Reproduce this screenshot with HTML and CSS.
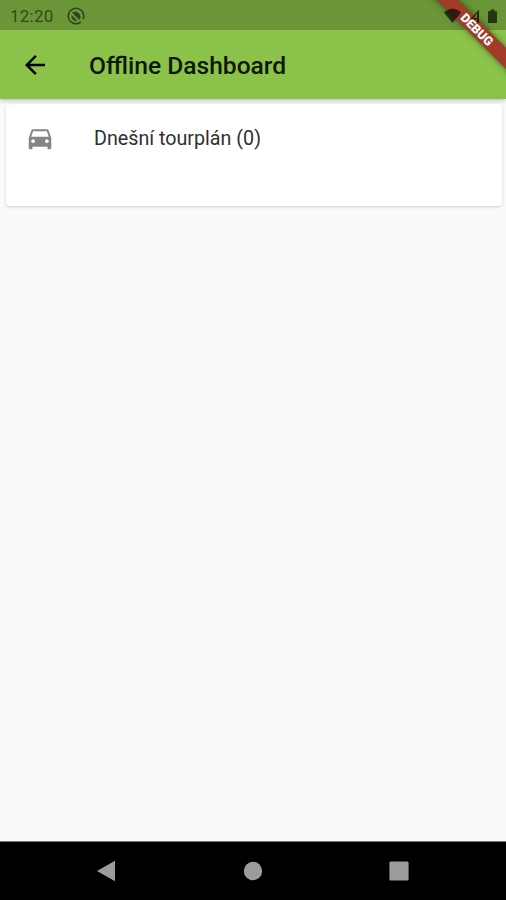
FILE: index.html
```html
<!DOCTYPE html>
<html lang="cs">
  <head>
    <meta charset="utf-8">
    <meta name="viewport" content="width=device-width, initial-scale=1.0">
    <title>Offline Dashboard</title>
    <link rel="stylesheet" href="styles.css">
  </head>
<body>
  <div class="screen">
    <div class="statusbar">
      <span class="clock">12:20</span>
      <svg class="sync" viewBox="0 0 18 18">
        <circle cx="9" cy="9" r="7.8" fill="none" stroke="currentColor" stroke-width="1.600" stroke-dasharray="45 4" stroke-dashoffset="-7"/>
        <path d="M5 5.500C8 3.500 13 5 13.500 9.500C13.500 11 13 12 12.300 12.700zM4.500 8l6 6C7 14.500 4 12 4.500 8z" fill="currentColor"/>
      </svg>
      <svg class="system" viewBox="0 0 56 18">
        <path d="M0 5.500Q8.500-2 17 5.500L8.500 16z"/>
        <path d="M35 2.500v13.500h-2v-3.500h-7zM33 6.500l-3.800 4.500H33z" fill-rule="evenodd"/>
        <path d="M44 4.200h2.500V2.500h4v1.700H53V16h-9z"/>
      </svg>
    </div>
    <div class="appbar">
      <svg class="back" viewBox="0 0 24 24"><path d="M20 11H7.830l5.590-5.590L12 4l-8 8 8 8 1.410-1.410L7.830 13H20v-2z"/></svg>
      <h1>Offline Dashboard</h1>
    </div>
    <div class="content">
      <div class="card">
        <svg class="car" viewBox="0 0 24 24"><path d="M18.920 6.010C18.720 5.420 18.160 5 17.500 5h-11c-.66 0-1.210.42-1.420 1.010L3 12v8c0 .55.45 1 1 1h1c.55 0 1-.45 1-1v-1h12v1c0 .55.45 1 1 1h1c.55 0 1-.45 1-1v-8l-2.080-5.990zM6.500 16c-.83 0-1.500-.67-1.500-1.500S5.670 13 6.500 13s1.500.67 1.500 1.500S7.330 16 6.500 16zm11 0c-.83 0-1.500-.67-1.500-1.500s.67-1.500 1.500-1.500 1.500.67 1.500 1.500-.67 1.500-1.500 1.500zM5 11l1.500-4.500h11L19 11H5z"/></svg>
        <span class="label">Dnešní tourplán (0)</span>
      </div>
    </div>
    <div class="navbar">
      <svg viewBox="0 0 22 22"><path d="M2 11L20 .7v20.600z"/></svg>
      <svg viewBox="0 0 22 22"><circle cx="11" cy="11" r="9.200"/></svg>
      <svg viewBox="0 0 22 22"><rect x="1.400" y="1.400" width="19.200" height="19.200" rx="1.500"/></svg>
    </div>
    <div class="banner"><span>DEBUG</span></div>
  </div>
</body>
</html>
```
FILE: styles.css
```css
body {
  margin: 0;
  background: #fafafa;
  font-family: Roboto, sans-serif;
}
.screen {
  position: relative;
  display: flex;
  flex-direction: column;
  height: 900px;
  overflow: hidden;
}
.statusbar {
  position: relative;
  z-index: 3;
  display: flex;
  align-items: center;
  box-sizing: border-box;
  height: 30px;
  padding: 1px 6px 0 10px;
  color: rgba(0,0,0,0.55);
}
.clock {
  width: 57px;
  font-size: 17px;
  letter-spacing: 0.25px;
}
.sync {
  width: 18px;
  height: 18px;
}
.system {
  width: 56px;
  height: 18px;
  margin-left: auto;
  fill: rgba(0,0,0,0.65);
}
.appbar {
  position: relative;
  z-index: 1;
  display: flex;
  align-items: center;
  box-sizing: border-box;
  height: 99px;
  margin-top: -30px;
  padding: 30px 20px 0;
  background: linear-gradient(#6a9638 30px, #8bc34a 30px);
  box-shadow: 0 1px 5px rgba(0,0,0,0.3);
}
.back {
  width: 30px;
  height: 30px;
}
h1 {
  margin: 1px 0 0 39px;
  font-size: 24.600px;
  font-weight: 500;
  color: #10180a;
}
.content {
  flex: 1;
  padding: 5px 4px 0 6px;
}
.card {
  display: flex;
  box-sizing: border-box;
  height: 102px;
  padding: 19px;
  border-radius: 4px;
  background: #fff;
  box-shadow: 0 1px 3px rgba(0,0,0,0.18);
}
.car {
  width: 30px;
  height: 30px;
  fill: #858585;
}
.label {
  margin: 4px 0 0 39px;
  font-size: 19.700px;
  line-height: 23px;
  color: #303030;
}
.navbar {
  display: flex;
  align-items: center;
  justify-content: space-between;
  box-sizing: border-box;
  height: 59px;
  padding: 0 96px 0 95px;
  border-top: 1px solid #777;
  background: #000;
}
.navbar svg {
  width: 22px;
  height: 22px;
  fill: #9c9c9c;
}
/* ribbon across the top right corner */
.banner {
  position: absolute;
  z-index: 2;
  top: 22px;
  left: 417px;
  width: 120px;
  height: 15px;
  transform: rotate(45deg);
  background: #a03c28;
  box-shadow: 0 0 6px rgba(0,0,0,0.5);
  color: #fff;
  font-size: 12.500px;
  font-weight: 900;
  line-height: 15px;
  text-align: center;
}
```
